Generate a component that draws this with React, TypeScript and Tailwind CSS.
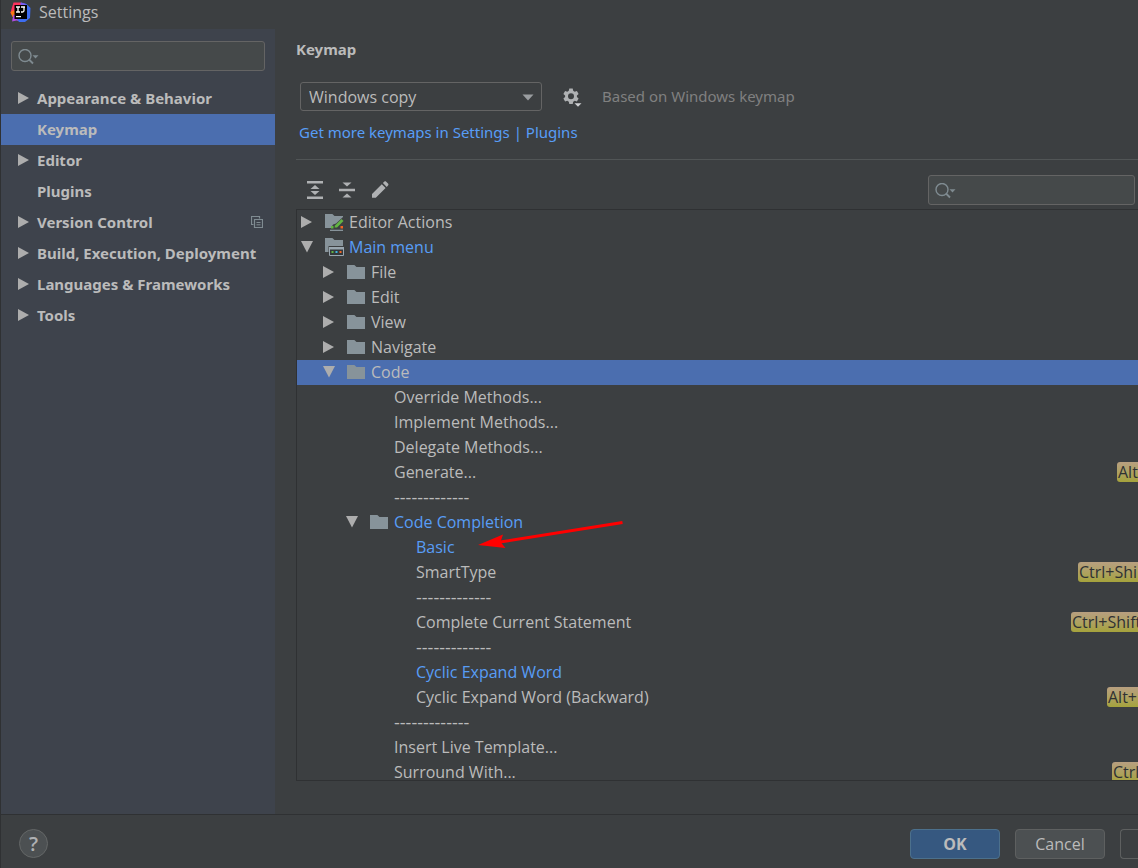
import { useState } from 'react';
import clsx from 'clsx';

type Category = { label: string; expandable: boolean; project?: boolean };

const CATEGORIES: Category[] = [
  { label: 'Appearance & Behavior', expandable: true },
  { label: 'Keymap', expandable: false },
  { label: 'Editor', expandable: true },
  { label: 'Plugins', expandable: false },
  { label: 'Version Control', expandable: true, project: true },
  { label: 'Build, Execution, Deployment', expandable: true },
  { label: 'Languages & Frameworks', expandable: true },
  { label: 'Tools', expandable: true },
];

type Node = {
  label: string;
  depth: number;
  state?: 'open' | 'closed';
  icon?: 'editor' | 'menu' | 'folder';
  changed?: boolean;
  shortcut?: string;
  shortcutWidth?: string;
  marked?: boolean;
};

const SEPARATOR = '-------------';

const NODES: Node[] = [
  { label: 'Editor Actions', depth: 0, state: 'closed', icon: 'editor' },
  { label: 'Main menu', depth: 0, state: 'open', icon: 'menu', changed: true },
  { label: 'File', depth: 1, state: 'closed', icon: 'folder' },
  { label: 'Edit', depth: 1, state: 'closed', icon: 'folder' },
  { label: 'View', depth: 1, state: 'closed', icon: 'folder' },
  { label: 'Navigate', depth: 1, state: 'closed', icon: 'folder' },
  { label: 'Code', depth: 1, state: 'open', icon: 'folder' },
  { label: 'Override Methods...', depth: 2 },
  { label: 'Implement Methods...', depth: 2 },
  { label: 'Delegate Methods...', depth: 2 },
  { label: 'Generate...', depth: 2, shortcut: 'Alt', shortcutWidth: 'w-[21px]' },
  { label: SEPARATOR, depth: 2 },
  { label: 'Code Completion', depth: 2, state: 'open', icon: 'folder', changed: true },
  { label: 'Basic', depth: 3, changed: true, marked: true },
  { label: 'SmartType', depth: 3, shortcut: 'Ctrl+Shi', shortcutWidth: 'w-[60px]' },
  { label: SEPARATOR, depth: 3 },
  { label: 'Complete Current Statement', depth: 3, shortcut: 'Ctrl+Shift', shortcutWidth: 'w-[67px]' },
  { label: SEPARATOR, depth: 3 },
  { label: 'Cyclic Expand Word', depth: 3, changed: true },
  { label: 'Cyclic Expand Word (Backward)', depth: 3, shortcut: 'Alt+', shortcutWidth: 'w-[31px]' },
  { label: SEPARATOR, depth: 2 },
  { label: 'Insert Live Template...', depth: 2 },
  { label: 'Surround With...', depth: 2, shortcut: 'Ctrl', shortcutWidth: 'w-[26px]' },
];

const GROUP_INDENT = ['pl-1', 'pl-[26px]', 'pl-[49px]'];
const LEAF_INDENT = ['pl-1', 'pl-[74px]', 'pl-[97px]', 'pl-[119px]'];

export default function App() {
  const [category, setCategory] = useState('Keymap');
  const [selected, setSelected] = useState(6);

  return (
    <div className="flex h-screen flex-col overflow-hidden border-l border-[#2f3133] bg-[#3c3f41] font-['Open_Sans','Noto_Sans',sans-serif] text-base text-[#bbbbbb]">
      {/* Title bar */}
      <header className="flex h-[29px] shrink-0 items-center gap-2 pb-[5px] pl-2">
        <Logo />
        <span className="leading-5">Settings</span>
      </header>

      <div className="flex min-h-0 flex-1">
        {/* Categories */}
        <aside className="w-[274px] shrink-0 bg-[#3e434c] pt-3">
          <div className="px-[10px] pb-3">
            <SearchBox label="Search settings" />
          </div>
          <nav className="font-['Noto_Sans',sans-serif]">
            {CATEGORIES.map((c) => (
              <button
                key={c.label}
                onClick={() => setCategory(c.label)}
                className={clsx(
                  'flex h-[31px] w-full items-center gap-2 pr-3 pb-px pl-[17px] text-left text-[15px] font-bold whitespace-nowrap',
                  c.label === category && 'bg-[#4b6eaf]',
                )}
              >
                <span className="w-[11px] shrink-0">{c.expandable && <Arrow />}</span>
                <span className="flex-1">{c.label}</span>
                {c.project && <ProjectIcon />}
              </button>
            ))}
          </nav>
        </aside>

        {/* Keymap page */}
        <main className="flex min-w-0 flex-1 flex-col pb-[33px] pl-[21px]">
          <h1 className="pt-2 font-['Noto_Sans',sans-serif] text-[15px] leading-6 font-bold">Keymap</h1>

          <div className="mt-[21px] flex items-center pl-1">
            <div className="relative">
              <select
                aria-label="Keymap scheme"
                className="block h-[29px] w-[242px] appearance-none rounded-[3px] border border-[#646464] bg-[#3c3f41] pl-2 outline-none"
              >
                <option>Windows copy</option>
              </select>
              <svg className="pointer-events-none absolute top-3 right-2 h-[7px] w-3" viewBox="0 0 12 7" fill="#9a9da0">
                <path d="M0.500 0.500h11L6 6.500z" />
              </svg>
            </div>
            <button aria-label="Scheme actions" className="ml-5">
              <GearIcon />
            </button>
            <span className="ml-5 font-['Noto_Sans',sans-serif] text-[15px] text-[#808080]">Based on Windows keymap</span>
          </div>

          <a
            href="#plugins"
            className="mt-[9px] ml-[3px] self-start font-['Noto_Sans',sans-serif] text-[15px] leading-6 text-[#589df6]"
          >
            Get more keymaps in Settings | Plugins
          </a>

          <hr className="mt-[15px] border-[#515556]" />

          <div className="mt-[15px] mb-1 flex items-center pr-[3px] pl-[10px]">
            <div className="flex flex-1 items-center gap-3">
              <button aria-label="Expand all">
                <svg className="size-5" viewBox="0 0 20 20" fill="#afb1b3">
                  <path d="M1 1h16v2.500H1zM1 16.500h16v2.500H1zM9 5l4.500 4h-9zM9 15l4.500-4h-9z" />
                </svg>
              </button>
              <button aria-label="Collapse all">
                <svg className="size-5" viewBox="0 0 20 20" fill="#afb1b3">
                  <path d="M1 8.800h16v2.500H1zM9 6.500L13.500 2.500h-9zM9 13.500l4.500 4h-9z" />
                </svg>
              </button>
              <button aria-label="Edit shortcut">
                <svg className="size-5" viewBox="0 0 20 20" fill="#afb1b3">
                  <path d="M2 14L11.800 4.200l3.800 3.800L5.800 17.800H2zM12.900 3.100l1.300-1.300c.6-.6 1.400-.6 2 0l1.800 1.800c.6.6.6 1.400 0 2l-1.300 1.300z" />
                </svg>
              </button>
            </div>
            <div className="w-[207px]">
              <SearchBox label="Search actions" />
            </div>
          </div>

          <ul className="min-h-0 flex-1 overflow-hidden border border-r-0 border-[#2f3133]">
            {NODES.map((n, i) => (
              <TreeRow key={i} node={n} selected={i === selected} onSelect={() => setSelected(i)} />
            ))}
          </ul>
        </main>
      </div>

      {/* Footer */}
      <footer className="flex h-[54px] shrink-0 items-center border-t border-[#2f3133] pt-1 pl-[18px]">
        <button
          aria-label="Help"
          className="flex size-[29px] items-center justify-center rounded-full border border-[#646767] bg-[#4c5052] text-xl font-semibold text-[#afb1b3]"
        >
          ?
        </button>
        <div className="ml-auto flex gap-[15px]">
          <button className="h-[30px] w-[90px] rounded-[4px] border border-[#4c708c] bg-[#365880] font-bold">OK</button>
          <button className="h-[30px] w-[90px] rounded-[4px] border border-[#5e6060] bg-[#4c5052]">Cancel</button>
          <button
            aria-label="Apply"
            className="h-[30px] w-[18px] rounded-l-[4px] border border-r-0 border-[#5e6060] bg-[#3c3f41]"
          />
        </div>
      </footer>
    </div>
  );
}

function TreeRow({ node, selected, onSelect }: { node: Node; selected: boolean; onSelect: () => void }) {
  const indent = node.state ? GROUP_INDENT[node.depth] : LEAF_INDENT[node.depth];
  return (
    <li>
      <button
        onClick={onSelect}
        className={clsx(
          'flex h-[25px] w-full items-center pb-px text-left whitespace-nowrap',
          indent,
          selected && 'bg-[#4b6eaf]',
          node.changed && 'text-[#589df6]',
          node.label === SEPARATOR && 'text-lg',
        )}
      >
        {node.state && (
          <span className="flex w-6 shrink-0">
            <Arrow open={node.state === 'open'} />
          </span>
        )}
        {node.icon && <FolderIcon kind={node.icon} />}
        <span className="relative">
          {node.label}
          {node.marked && <Pointer />}
        </span>
        {node.shortcut && (
          <span
            className={clsx(
              'ml-auto h-5 overflow-hidden rounded-l-[3px] bg-linear-to-b from-[#b89f80] to-[#a5a33b] pl-px leading-5 text-[#2f3133]',
              node.shortcutWidth,
            )}
          >
            {node.shortcut}
          </span>
        )}
      </button>
    </li>
  );
}

function SearchBox({ label }: { label: string }) {
  return (
    <div className="relative">
      <input
        type="text"
        aria-label={label}
        className="block h-[30px] w-full rounded-[3px] border border-[#646464] bg-[#45494a] pr-2 pl-8 outline-none"
      />
      <svg className="pointer-events-none absolute top-2 left-[7px] h-4 w-[21px]" viewBox="0 0 21 16" fill="none">
        <circle cx="7" cy="6.500" r="6" stroke="#7f8b91" strokeWidth="1.400" />
        <path d="M11 10.500l4 4" stroke="#7f8b91" strokeWidth="1.800" />
        <path d="M14.500 6.300h6l-3 3.200z" fill="#7f8b91" />
      </svg>
    </div>
  );
}

function Arrow({ open }: { open?: boolean }) {
  return (
    <svg className="size-3" viewBox="0 0 12 12" fill="#adadad">
      {open ? <path d="M0 0h12L6 11.500z" /> : <path d="M0 0l11 6-11 6z" />}
    </svg>
  );
}

function FolderIcon({ kind }: { kind: 'editor' | 'menu' | 'folder' }) {
  return (
    <svg className="mr-1 h-[18px] w-5 shrink-0" viewBox="0 0 20 18">
      {kind === 'folder' && <path d="M0 2h6.500c1 0 1.500.4 2.200 1.200L9.500 4H18v12H0z" fill="#87939a" />}
      {kind === 'editor' && (
        <>
          <path d="M0 1h6.500c1 0 1.500.4 2.200 1.200L9.500 3H18v1L11 10.500l-3 1L6 15H0z" fill="#87939a" />
          <path d="M10 12.500L16.500 6l2 2-6.500 6.500H9.500z" fill="#62b543" />
          <path d="M6 13h2.500v2.500H6z" fill="#62b543" />
          <path d="M15.500 13H18v2.500h-2.500z" fill="#f26522" />
          <path d="M5 16.700h13V18H5z" fill="#87939a" />
        </>
      )}
      {kind === 'menu' && (
        <>
          <path d="M0 0h6.500c1 0 1.500.4 2.200 1.200L9.500 2H18v6H3.500v6H0z" fill="#87939a" />
          <path d="M4.500 9.500h14v8h-14z" fill="#33383b" stroke="#9aa7b0" />
          <path d="M4 9h15v2.500H4z" fill="#9aa7b0" />
          <path d="M6.500 13h2v2h-2z" fill="#62b543" />
          <path d="M10.500 13h2v2h-2z" fill="#40b6e0" />
          <path d="M14.500 13h2v2h-2z" fill="#f26522" />
        </>
      )}
    </svg>
  );
}

function GearIcon() {
  return (
    <svg className="h-5 w-5" viewBox="0 0 20 20">
      <path
        fill="#afb1b3"
        fillRule="evenodd"
        d="M7.300 1.500h3.400l.5 2.300 1.500.9 2.200-.8 1.700 3-1.700 1.500v1.700l1.700 1.500-1.700 3-2.200-.8-1.500.9-.5 2.300H7.300l-.5-2.300-1.500-.9-2.200.8-1.700-3 1.700-1.500V8.400L1.400 6.900l1.700-3 2.200.8 1.500-.9zM9 6.300a3 3 0 1 0 0 6 3 3 0 0 0 0-6z"
      />
      <path d="M11.500 15.500h9L16 20z" fill="#3c3f41" />
      <path d="M12.500 16.300h7L16 19.700z" fill="#d0d2d4" />
    </svg>
  );
}

function ProjectIcon() {
  return (
    <svg className="h-3 w-3" viewBox="0 0 12 12" fill="none" stroke="#7f8b91">
      <path d="M2.500 8.500H.5v-8h8v2" strokeWidth="1.200" />
      <path d="M3.500 3.500h8v8h-8z" strokeWidth="1.200" />
      <path d="M5.500 6.500h4M5.500 8.800h4" />
    </svg>
  );
}

function Pointer() {
  return (
    <svg className="pointer-events-none absolute -top-[14px] left-[62px] h-7 w-[146px]" viewBox="0 0 146 28">
      <path d="M22 21L144.500 1.500" stroke="#ff0000" strokeWidth="3" />
      <path d="M0 24l25-10.500-2.500 7.500 5 6z" fill="#ff0000" />
    </svg>
  );
}

function Logo() {
  return (
    <svg className="size-[22px]" viewBox="0 0 22 22">
      <path d="M2.500 8L4.500 1.500h7.500L14 7 8 15l-5-1-1.500-2z" fill="#fe315d" />
      <path d="M1.500 11l4-2 1 6.500-3 .5z" fill="#f97a12" />
      <path d="M3 20.500l1.500-7 8 3-1 4-4-1z" fill="#af4ee0" />
      <path d="M12 1.500l5.500 1.500 4 4-.5 10-5 4H10L8 18l7-10z" fill="#3d6df0" />
      <path d="M12 1.500l5 1.500-3 3-3-3z" fill="#7b5cf0" />
      <path d="M5.500 4h12.500v14H5.500z" fill="#000" />
      <path d="M7 6h4M9 6v5M7 11h4M12 6h4M15 6v3.500c0 1-.5 1.500-1.500 1.500H12" stroke="#fff" strokeWidth="1.300" fill="none" />
      <path d="M7 15h5v1.200H7z" fill="#fff" />
    </svg>
  );
}
